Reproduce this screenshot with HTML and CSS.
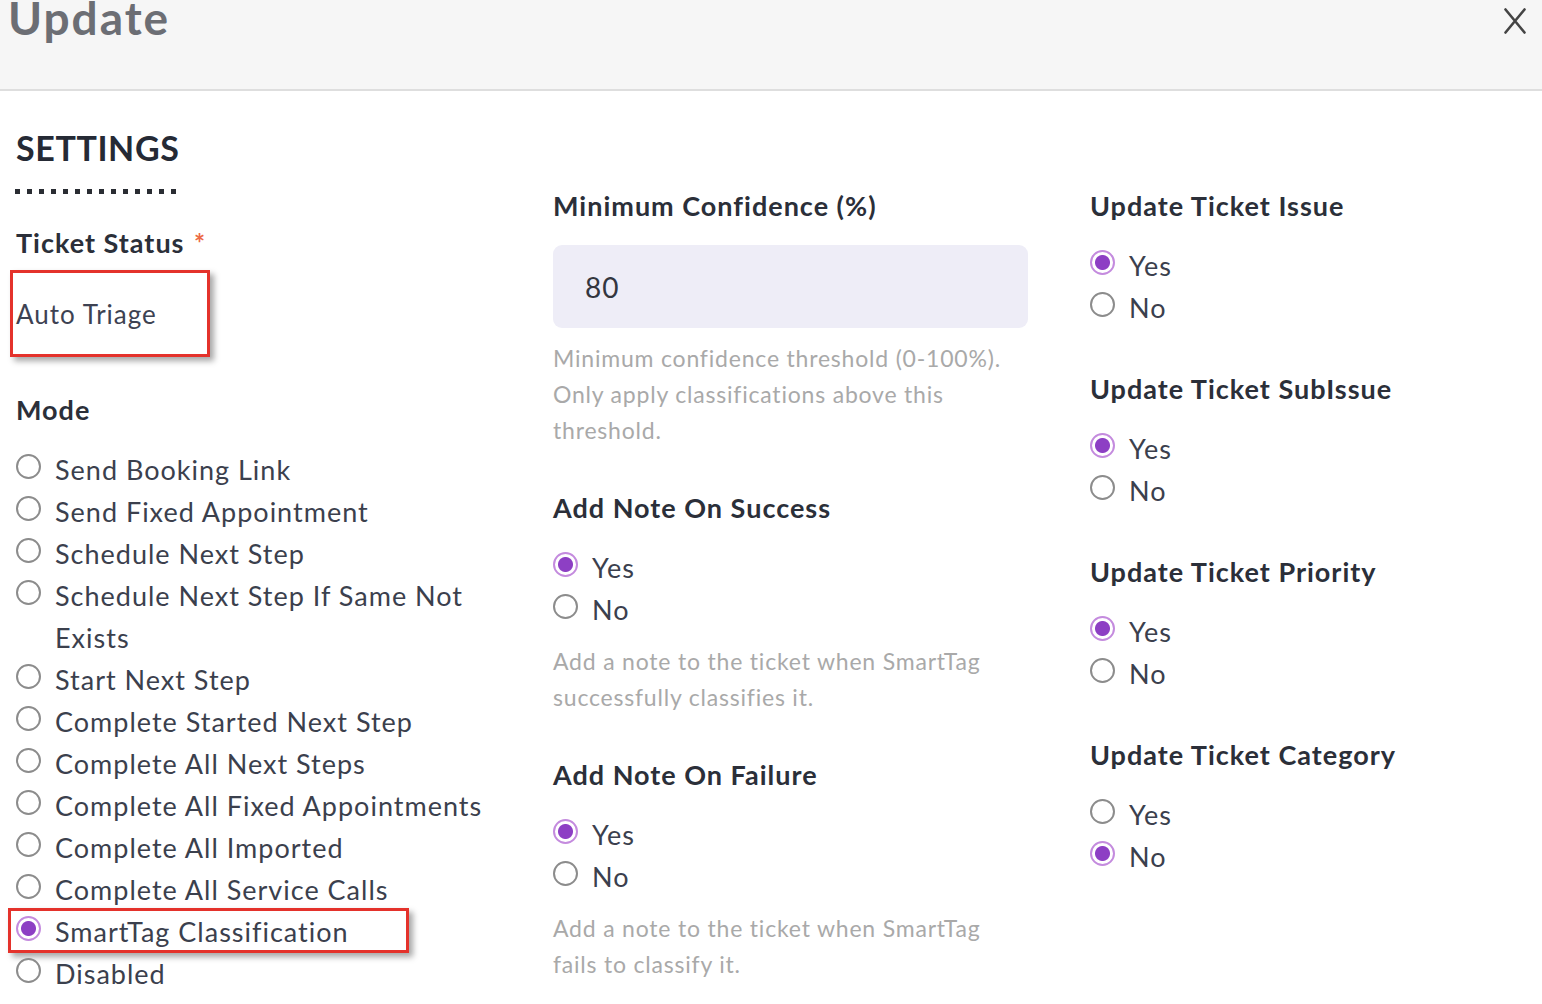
FILE: index.html
```html
<!DOCTYPE html>
<html lang="en">
<head>
    <meta charset="UTF-8">
    <meta name="viewport" content="width=device-width, initial-scale=1.0">
    <title>Update - Settings</title>
    <link rel="stylesheet" href="styles.css">
</head>
<body>

    <!-- Header -->
    <header class="modal-header">
        <h1>Update</h1>
        <svg class="close-btn" viewBox="0 0 22 26" aria-label="Close">
            <path d="M1.5 1.5 L20.5 24.5 M20.5 1.5 L1.5 24.5" stroke="#444" stroke-width="2.6" stroke-linecap="round" fill="none"/>
        </svg>
    </header>

    <!-- Settings -->
    <main class="settings">

        <!-- Column 1 -->
        <div class="col">
            <h2 class="section-title">SETTINGS</h2>
            <div class="title-dots"></div>

            <label class="field-label status-label">Ticket Status <span class="required">*</span></label>
            <div class="status-box">Auto Triage</div>

            <label class="field-label mode-label">Mode</label>
            <div class="radio-list">
                <label class="radio-row"><input type="radio" name="mode"><span>Send Booking Link</span></label>
                <label class="radio-row"><input type="radio" name="mode"><span>Send Fixed Appointment</span></label>
                <label class="radio-row"><input type="radio" name="mode"><span>Schedule Next Step</span></label>
                <label class="radio-row"><input type="radio" name="mode"><span>Schedule Next Step If Same Not Exists</span></label>
                <label class="radio-row"><input type="radio" name="mode"><span>Start Next Step</span></label>
                <label class="radio-row"><input type="radio" name="mode"><span>Complete Started Next Step</span></label>
                <label class="radio-row"><input type="radio" name="mode"><span>Complete All Next Steps</span></label>
                <label class="radio-row"><input type="radio" name="mode"><span>Complete All Fixed Appointments</span></label>
                <label class="radio-row"><input type="radio" name="mode"><span>Complete All Imported</span></label>
                <label class="radio-row"><input type="radio" name="mode"><span>Complete All Service Calls</span></label>
                <label class="radio-row highlight"><input type="radio" name="mode" checked><span>SmartTag Classification</span></label>
                <label class="radio-row"><input type="radio" name="mode"><span>Disabled</span></label>
            </div>
        </div>

        <!-- Column 2 -->
        <div class="col col-offset">
            <label class="field-label">Minimum Confidence (%)</label>
            <input class="text-input" type="text" value="80" readonly>
            <p class="help-text">Minimum confidence threshold (0-100%). Only apply classifications above this threshold.</p>

            <label class="field-label group-label">Add Note On Success</label>
            <div class="radio-list">
                <label class="radio-row"><input type="radio" name="note-success" checked><span>Yes</span></label>
                <label class="radio-row"><input type="radio" name="note-success"><span>No</span></label>
            </div>
            <p class="help-text">Add a note to the ticket when SmartTag successfully classifies it.</p>

            <label class="field-label group-label">Add Note On Failure</label>
            <div class="radio-list">
                <label class="radio-row"><input type="radio" name="note-failure" checked><span>Yes</span></label>
                <label class="radio-row"><input type="radio" name="note-failure"><span>No</span></label>
            </div>
            <p class="help-text">Add a note to the ticket when SmartTag fails to classify it.</p>
        </div>

        <!-- Column 3 -->
        <div class="col col-offset">
            <label class="field-label">Update Ticket Issue</label>
            <div class="radio-list">
                <label class="radio-row"><input type="radio" name="issue" checked><span>Yes</span></label>
                <label class="radio-row"><input type="radio" name="issue"><span>No</span></label>
            </div>

            <label class="field-label group-label">Update Ticket SubIssue</label>
            <div class="radio-list">
                <label class="radio-row"><input type="radio" name="subissue" checked><span>Yes</span></label>
                <label class="radio-row"><input type="radio" name="subissue"><span>No</span></label>
            </div>

            <label class="field-label group-label">Update Ticket Priority</label>
            <div class="radio-list">
                <label class="radio-row"><input type="radio" name="priority" checked><span>Yes</span></label>
                <label class="radio-row"><input type="radio" name="priority"><span>No</span></label>
            </div>

            <label class="field-label group-label">Update Ticket Category</label>
            <div class="radio-list">
                <label class="radio-row"><input type="radio" name="category"><span>Yes</span></label>
                <label class="radio-row"><input type="radio" name="category" checked><span>No</span></label>
            </div>
        </div>

    </main>

</body>
</html>
```

FILE: styles.css
```css
* {
    margin: 0;
    padding: 0;
    box-sizing: border-box;
}

body {
    font-family: 'Lato', 'Noto Sans', sans-serif;
    background-color: #fff;
    color: #3b404d;
    letter-spacing: 1px;
    overflow: hidden;
}

/* Header */
.modal-header {
    height: 91px;
    background-color: #f6f6f6;
    border-bottom: 2px solid #dedede;
    display: flex;
    justify-content: space-between;
    align-items: flex-start;
    padding: 0 16px 0 8px;
}

.modal-header h1 {
    font-size: 46px;
    line-height: 52px;
    margin-top: -8px;
    color: #6c6e74;
    font-weight: 700;
    letter-spacing: 2px;
}

.close-btn {
    width: 22px;
    height: 26px;
    margin-top: 8px;
}

/* Settings grid */
.settings {
    display: grid;
    grid-template-columns: 475px 475px 1fr;
    column-gap: 62px;
    padding: 37px 0 0 16px;
}

.col {
    display: flex;
    flex-direction: column;
    align-items: flex-start;
}

.col-offset {
    padding-top: 62px;
}

.section-title {
    font-size: 34px;
    line-height: 40px;
    font-weight: 700;
    color: #252a35;
    letter-spacing: 0.6px;
}

.title-dots {
    width: 161px;
    height: 5px;
    margin-top: 21px;
    margin-left: -1px;
    background: repeating-linear-gradient(90deg, #2a2d33 0 5px, transparent 5px 12px);
}

.field-label {
    display: block;
    font-size: 27px;
    line-height: 32px;
    font-weight: 700;
    color: #2b2f39;
}

.status-label {
    margin-top: 33px;
}

.required {
    color: #ec6a45;
    font-size: 26px;
    vertical-align: top;
    margin-left: 2px;
}

.status-box {
    width: 200px;
    height: 87px;
    margin-top: 11px;
    margin-left: -6px;
    border: 3px solid #e4322b;
    box-shadow: 4px 4px 6px rgba(0, 0, 0, 0.35);
    display: flex;
    align-items: center;
    padding: 0 0 0 3px;
    font-size: 26px;
    color: #3d4252;
}

.mode-label {
    margin-top: 37px;
}

/* Radios */
.radio-list {
    display: flex;
    flex-direction: column;
    margin-top: 23px;
}

.radio-row {
    display: flex;
    align-items: flex-start;
    gap: 14px;
    font-size: 27px;
    line-height: 42px;
    color: #3b404d;
    position: relative;
}

.radio-row input {
    appearance: none;
    -webkit-appearance: none;
    flex: 0 0 auto;
    width: 25px;
    height: 25px;
    margin-top: 5px;
    border: 2px solid #8c8c8c;
    border-radius: 50%;
    background-color: #fff;
}

.radio-row input:checked {
    border-color: #c48bde;
    background: radial-gradient(circle, #8d3fc4 0 7px, #fff 8px);
}

.highlight::after {
    content: "";
    position: absolute;
    left: -8px;
    top: -3px;
    width: 395px;
    height: 39px;
    border: 3px solid #e4322b;
    box-shadow: 4px 4px 6px rgba(0, 0, 0, 0.35);
}

/* Column 2 */
.text-input {
    width: 475px;
    height: 83px;
    margin-top: 23px;
    border: none;
    border-radius: 9px;
    background-color: #eeedf7;
    padding-left: 32px;
    font-family: 'Lato', 'Noto Sans', sans-serif;
    font-size: 28px;
    letter-spacing: 1px;
    color: #33363f;
    outline: none;
}

.help-text {
    margin-top: 12px;
    font-size: 23px;
    line-height: 36px;
    color: #a9a9a9;
    letter-spacing: 0.8px;
    max-width: 462px;
}

.group-label {
    margin-top: 44px;
}
```
